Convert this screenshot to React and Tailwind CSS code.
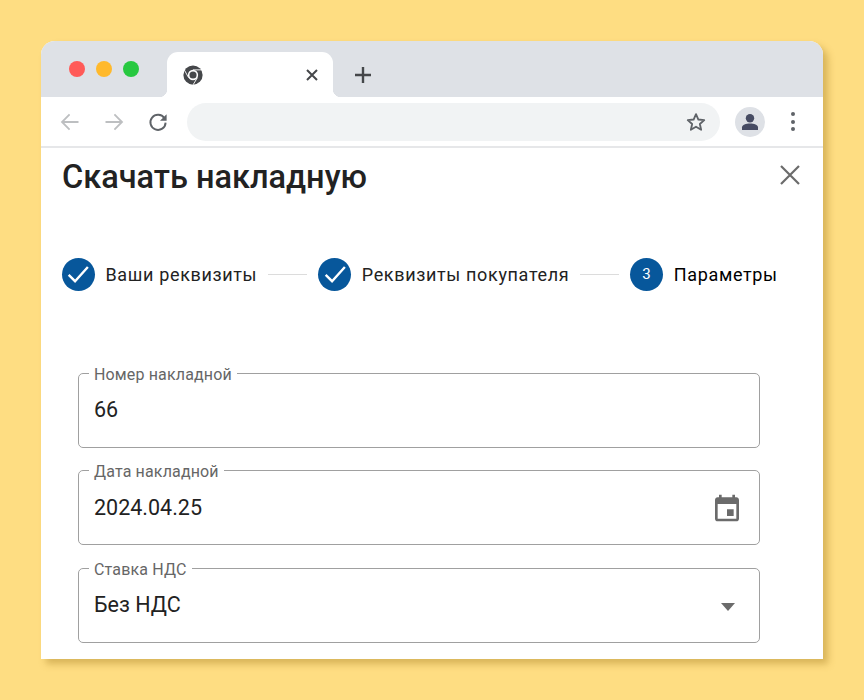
const ROBOTO = "font-['Roboto',sans-serif]";

function Dot({ className }) {
  return <span className={`h-4 w-4 rounded-full ${className}`} />;
}

function ChromeLogo() {
  return (
    <svg width="22" height="22" viewBox="0 0 24 24">
      <circle cx="12" cy="12" r="10.5" fill="#45474a" />
      <circle cx="12" cy="12" r="5.6" fill="#fff" />
      <circle cx="12" cy="12" r="3.9" fill="#45474a" />
      <path d="M12 6.4h9.4M7.2 14.9 2.6 6.6M16.8 14.9 12 22.8" stroke="#fff" strokeWidth="1" fill="none" />
    </svg>
  );
}

function Arrow({ flip }) {
  return (
    <svg width="20" height="20" viewBox="0 0 20 20" fill="none" stroke="#bdbfc1" strokeWidth="1.8" className={flip ? "-scale-x-100" : ""}>
      <path d="M18.5 10H2.2M9.6 2.4 2 10l7.6 7.6" />
    </svg>
  );
}

function Reload() {
  return (
    <svg width="20" height="20" viewBox="0 0 20 20" fill="none">
      <path d="M16.4 6.2A7.6 7.6 0 1 0 17.6 10.6" stroke="#5f6368" strokeWidth="1.9" />
      <path d="M18.6 2.2v6.6H12z" fill="#5f6368" />
    </svg>
  );
}

function Check() {
  return (
    <svg width="24" height="24" viewBox="0 0 18 18" fill="none" stroke="#fff" strokeWidth="1.8">
      <path d="M2 9.6 6.8 14.4 16.4 3.8" />
    </svg>
  );
}

function StepCircle({ children }) {
  return (
    <span className="flex h-[32.5px] w-[32.5px] shrink-0 items-center justify-center rounded-full bg-[#07579b] text-[15px] text-white">
      {children}
    </span>
  );
}

function Step({ label, active, children }) {
  return (
    <div className="flex items-center gap-[11px]">
      <StepCircle>{children}</StepCircle>
      <span className={`whitespace-nowrap text-[18px] tracking-[0.65px] ${active ? "text-black" : "text-[#222222]"}`}>{label}</span>
    </div>
  );
}

function Connector() {
  return <span className="mx-[11px] h-[1.5px] w-[39px] shrink-0 bg-[#dcdcdc]" />;
}

function Field({ label, value, children }) {
  return (
    <fieldset className="h-[84px] rounded-[5px] border-[1.5px] border-[#a0a0a0] pr-[19px] pl-[15px]">
      <legend className="-ml-[5px] px-[5px] pt-[3px] text-[16px] leading-[16px] tracking-[0.15px] text-[#666666]">{label}</legend>
      <div className="flex h-[55px] items-center justify-between">
        <span className="text-[21.5px] leading-[24px] text-[#222222]">{value}</span>
        {children}
      </div>
    </fieldset>
  );
}

export default function App() {
  return (
    <div className={`h-[700px] w-[864px] overflow-hidden bg-[#fedd82] pt-[41px] pl-[41px] ${ROBOTO}`}>
      <div className="flex h-[618px] w-[782px] flex-col overflow-hidden rounded-t-[14px] bg-white shadow-[5px_5px_7px_rgba(170,130,40,0.45)]">
        <div className="flex h-[56px] shrink-0 items-end bg-[#dee1e6]">
          <div className="flex h-[56px] w-[126px] items-center gap-[11px] pl-[28px]">
            <Dot className="bg-[#ff5a58]" />
            <Dot className="bg-[#ffb92c]" />
            <Dot className="bg-[#27c840]" />
          </div>
          <div className="relative flex h-[45px] w-[166px] items-center justify-between rounded-t-[11px] bg-white pr-[14px] pl-[15px] before:absolute before:bottom-0 before:-left-[8px] before:h-[8px] before:w-[8px] before:bg-[radial-gradient(circle_at_0_0,transparent_8px,white_8.5px)] after:absolute after:-right-[8px] after:bottom-0 after:h-[8px] after:w-[8px] after:bg-[radial-gradient(circle_at_100%_0,transparent_8px,white_8.5px)]">
            <ChromeLogo />
            <svg width="14" height="14" viewBox="0 0 14 14" stroke="#45474a" strokeWidth="2">
              <path d="M2 2l10 10M12 2 2 12" />
            </svg>
          </div>
          <div className="flex h-[45px] w-[60px] items-center justify-center">
            <svg width="18" height="18" viewBox="0 0 18 18" stroke="#45474a" strokeWidth="2.4">
              <path d="M9 1v16M1 9h16" />
            </svg>
          </div>
        </div>

        <div className="flex h-[51px] shrink-0 items-center border-b-2 border-[#e6e7e9] pl-[19px]">
          <Arrow />
          <span className="w-[24px]" />
          <Arrow flip />
          <span className="w-[24px]" />
          <Reload />
          <div className="ml-[19px] flex h-[38px] w-[533px] items-center justify-end rounded-[19px] bg-[#f1f3f4] pr-[13px]">
            <svg width="22" height="22" viewBox="0 0 24 24" fill="none" stroke="#5f6368" strokeWidth="2">
              <path d="M12 3.4l2.6 5.9 6.4.6-4.8 4.3 1.4 6.3-5.6-3.3-5.6 3.3 1.4-6.3L3 9.9l6.4-.6z" strokeLinejoin="round" />
            </svg>
          </div>
          <div className="ml-[15px] flex h-[30px] w-[30px] items-center justify-center rounded-full bg-[#dee1e6]">
            <svg width="18" height="18" viewBox="0 0 18 18" fill="#464b63">
              <circle cx="9" cy="5.2" r="4.2" />
              <path d="M1 17v-2.4C1 12 5 10.6 9 10.6s8 1.4 8 4V17z" />
            </svg>
          </div>
          <div className="ml-[26px] flex flex-col gap-[3.5px]">
            <span className="h-[4px] w-[4px] rounded-full bg-[#5f6368]" />
            <span className="h-[4px] w-[4px] rounded-full bg-[#5f6368]" />
            <span className="h-[4px] w-[4px] rounded-full bg-[#5f6368]" />
          </div>
        </div>

        <div className="flex flex-1 flex-col px-[21px]">
          <div className="flex items-start justify-between pt-[8px]">
            <h1 className="text-[32.5px] leading-[42px] font-medium text-[#222222]">Скачать накладную</h1>
            <svg width="22" height="22" viewBox="0 0 22 22" stroke="#6b6b6b" strokeWidth="2.2" className="mt-[8px] mr-[1px]">
              <path d="M2 2l18 18M20 2 2 20" />
            </svg>
          </div>

          <div className="mt-[60px] flex items-center">
            <Step label="Ваши реквизиты"><Check /></Step>
            <Connector />
            <Step label="Реквизиты покупателя"><Check /></Step>
            <Connector />
            <Step label="Параметры" active>3</Step>
          </div>

          <div className="mt-[73px] ml-[16px] flex w-[682px] flex-col gap-[13.5px]">
            <Field label="Номер накладной" value="66" />
            <Field label="Дата накладной" value="2024.04.25">
              <svg width="32" height="32" viewBox="0 0 24 24" fill="#6b6b6b" className="mr-[-3px]">
                <path d="M19 4h-1V2h-2v2H8V2H6v2H5C3.9 4 3 4.9 3 6v14c0 1.1.9 2 2 2h14c1.1 0 2-.9 2-2V6c0-1.1-.9-2-2-2zm0 16H5V9h14v11zm-2-7h-5v5h5v-5z" />
              </svg>
            </Field>
            <Field label="Ставка НДС" value="Без НДС">
              <span className="mt-[3px] mr-[5px] h-0 w-0 border-x-[7px] border-t-[8px] border-x-transparent border-t-[#6b6b6b]" />
            </Field>
          </div>
        </div>
      </div>
    </div>
  );
}
